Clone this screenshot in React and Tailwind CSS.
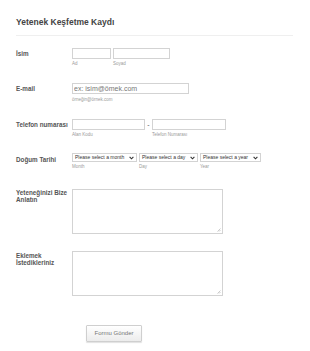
import React from 'react'

const field = 'border border-[#d3d3d3] bg-white outline-none'
const sub = 'text-[4.5px] leading-[5px] text-[#9a9a9a]'
const label = 'w-[56px] shrink-0 text-[6.3px] font-bold text-[#555]'

function Chevron() {
  return (
    <svg width="5" height="4" viewBox="0 0 5 4" className="shrink-0">
      <path d="M0.6 0.8 L2.5 2.8 L4.4 0.8" fill="none" stroke="#333" strokeWidth="1.1" />
    </svg>
  )
}

function Select({ text, width, hint }) {
  return (
    <div className="flex flex-col" style={{ width }}>
      <div className={`${field} h-[9px] flex items-center justify-between px-[2px] border-[#bbb]`}>
        <span className="text-[5px] leading-[5px] text-[#333] whitespace-nowrap">{text}</span>
        <Chevron />
      </div>
      <span className={`${sub} mt-[2px]`}>{hint}</span>
    </div>
  )
}

function Area() {
  return (
    <div className={`${field} relative w-[151px] h-[45px]`}>
      <textarea className="w-full h-full resize-none outline-none bg-transparent" />
      <svg width="4" height="4" viewBox="0 0 4 4" className="absolute right-[1px] bottom-[1px]">
        <path d="M0.5 3.5 L3.5 0.5 M2 3.5 L3.5 2" stroke="#999" strokeWidth="0.5" />
      </svg>
    </div>
  )
}

export default function App() {
  return (
    <div className="w-[310px] min-h-[351px] bg-white pl-4 pr-[17px] pt-[16px] font-['Liberation_Sans',Arial,sans-serif]">
      <h1 className="text-[8.5px] font-bold text-[#444] leading-[12px]">Yetenek Keşfetme Kaydı</h1>
      <div className="mt-[7px] h-px bg-[#efefef]" />

      <div className="flex flex-col">
        {/* isim */}
        <div className="flex items-start mt-[12px] h-[35px]">
          <div className={`${label} leading-[11px]`}>İsim</div>
          <div className="flex gap-[2px]">
            <div className="flex flex-col">
              <input className={`${field} w-[39px] h-[11px]`} />
              <span className={`${sub} mt-[2px]`}>Ad</span>
            </div>
            <div className="flex flex-col">
              <input className={`${field} w-[57px] h-[11px]`} />
              <span className={`${sub} mt-[2px]`}>Soyad</span>
            </div>
          </div>
        </div>

        {/* e-mail */}
        <div className="flex items-start h-[36px]">
          <div className={`${label} leading-[11px]`}>E-mail</div>
          <div className="flex flex-col">
            <input
              className={`${field} w-[117px] h-[11px] px-[1px] text-[7px] placeholder:text-[#777]`}
              placeholder="ex: isim@ömek.com"
            />
            <span className={`${sub} mt-[2.5px]`}>örneğin@örnek.com</span>
          </div>
        </div>

        {/* telefon */}
        <div className="flex items-start h-[34px]">
          <div className={`${label} leading-[11px] whitespace-nowrap`}>Telefon numarası</div>
          <div className="flex">
            <div className="flex flex-col">
              <input className={`${field} w-[73px] h-[11px]`} />
              <span className={`${sub} mt-[2px]`}>Alan Kodu</span>
            </div>
            <span className="w-[7px] text-center text-[7px] leading-[11px] text-[#555]">-</span>
            <div className="flex flex-col">
              <input className={`${field} w-[74px] h-[11px]`} />
              <span className={`${sub} mt-[2px]`}>Telefon Numarası</span>
            </div>
          </div>
        </div>

        {/* dogum tarihi */}
        <div className="flex items-start h-[36px]">
          <div className={`${label} leading-[9px] pt-[1.5px]`}>Doğum Tarihi</div>
          <div className="flex gap-[2px]">
            <Select text="Please select a month" width="65px" hint="Month" />
            <Select text="Please select a day" width="59px" hint="Day" />
            <Select text="Please select a year" width="61px" hint="Year" />
          </div>
        </div>

        {/* yetenek */}
        <div className="flex items-start h-[62px]">
          <div className={`${label} leading-[6.5px] pt-[1px]`}>Yeteneğinizi Bize Anlatın</div>
          <Area />
        </div>

        {/* eklemek */}
        <div className="flex items-start h-[44px]">
          <div className={`${label} leading-[7px] pt-[1px]`}>Eklemek İstedikleriniz</div>
          <Area />
        </div>

        <div className="mt-[23px] pl-[70px]">
          <button className="w-[56px] h-[17px] border border-[#cfcfcf] rounded-[1px] bg-gradient-to-b from-white to-[#ececec] shadow-[0_1px_1px_rgba(0,0,0,0.12)] text-[6px] text-[#777]">
            Formu Gönder
          </button>
        </div>
      </div>
    </div>
  )
}
